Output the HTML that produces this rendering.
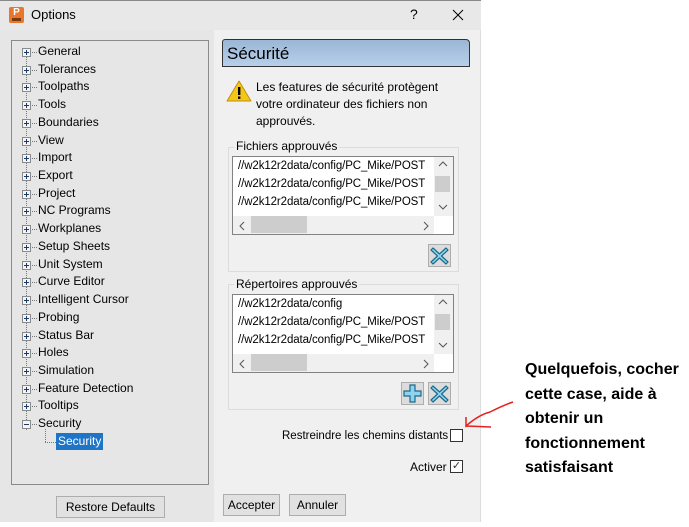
<!DOCTYPE html>
<html><head><meta charset="utf-8"><style>
*{margin:0;padding:0;box-sizing:border-box}
body{width:689px;height:527px;background:#fff;font-family:"Liberation Sans",sans-serif;font-size:12px;color:#000;position:relative;overflow:hidden}
.a{position:absolute}
.win{left:0;top:0;width:481px;height:522px;background:#f0f0f0;border-right:1px solid #ddd}
.title{left:0;top:0;width:481px;height:30px;background:#e8e8e8;border-top:1px solid #888}
.left{left:0;top:30px;width:214px;height:492px;background:#e6e6e6}
.tree{left:11px;top:40px;width:198px;height:445px;border:1px solid #8a8a8a;background:#e6e6e6}
.row{position:absolute;left:26px;height:17px;line-height:17px;white-space:nowrap}
.pb{position:absolute;left:10px;width:9px;height:9px;border:1px solid #8a8a8a;background:#f4f4f4}
.pb:before{content:"";position:absolute;left:1px;top:3px;width:5px;height:1px;background:#1a3a6a}
.pb.p:after{content:"";position:absolute;left:3px;top:1px;width:1px;height:5px;background:#1a3a6a}
.dot{position:absolute;left:20px;width:5px;border-top:1px dotted #777}
.btn{border:1px solid #adadad;background:#e1e1e1;text-align:center;line-height:20px;height:22px}
.list{background:#fff;border:1px solid #828282;overflow:hidden}
.it{position:absolute;left:5px;white-space:nowrap;font-size:11.5px;letter-spacing:-0.1px}
.grp{border:1px solid #dcdcdc}
.ib{width:23px;height:23px;border:1px solid #adadad;background:#dcdcdc}
</style></head><body>
<div class="a win"></div>
<div class="a title"></div>
<div class="a" style="left:9px;top:7px;width:15px;height:16px;background:#e8762c;border-radius:2px;color:#fff;font-size:10px;font-weight:bold;text-align:center;line-height:12px">P<div style="position:absolute;left:3px;bottom:2px;width:9px;height:3px;background:#7a3a10"></div></div>
<div class="a" style="left:31px;top:7px;font-size:13px">Options</div>
<div class="a" style="left:410px;top:6px;font-size:14px">?</div>
<svg class="a" style="left:452px;top:9px" width="12" height="12"><path d="M1 1 L11 11 M11 1 L1 11" stroke="#000" stroke-width="1"/></svg>
<div class="a left"></div>
<div class="a tree">
<div class="a" style="left:14px;top:12px;height:377px;border-left:1px dotted #777"></div>
<div id="rows"></div>
</div>
<div class="a btn" style="left:56px;top:496px;width:109px;">Restore Defaults</div>

<div class="a" style="left:222px;top:39px;width:248px;height:28px;border:1px solid #333;border-radius:3px 4px 0 0;background:linear-gradient(#9bb6d6,#b6cfea);font-size:17px;line-height:27px;padding-left:4px">Sécurité</div>
<svg class="a" style="left:226px;top:80px" width="26" height="22" viewBox="0 0 26 22"><path d="M13 1 L25 21 L1 21 Z" fill="#f5c518" stroke="#c09010" stroke-linejoin="round"/><rect x="12" y="7" width="2.4" height="8" fill="#000"/><rect x="12" y="16.5" width="2.4" height="2.4" fill="#000"/></svg>
<div class="a" style="left:256px;top:79px;line-height:17px;width:200px">Les features de sécurité protègent votre ordinateur des fichiers non approuvés.</div>

<div class="a grp" style="left:228px;top:147px;width:231px;height:125px"></div>
<div class="a" style="left:234px;top:139px;background:#f0f0f0;padding:0 2px">Fichiers approuvés</div>
<div class="a list" style="left:232px;top:156px;width:222px;height:79px">
<div class="it" style="top:3px">//w2k12r2data/config/PC_Mike/POST</div>
<div class="it" style="top:21px">//w2k12r2data/config/PC_Mike/POST</div>
<div class="it" style="top:39px">//w2k12r2data/config/PC_Mike/POST</div>
<div class="a" style="left:201px;top:0;width:19px;height:59px;background:#f0f0f0"></div>
<div class="a" style="left:202px;top:19px;width:15px;height:16px;background:#cdcdcd"></div>
<svg class="a" style="left:205px;top:4px" width="10" height="6"><path d="M1 5 L5 1 L9 5" fill="none" stroke="#555"/></svg>
<svg class="a" style="left:205px;top:47px" width="10" height="6"><path d="M1 1 L5 5 L9 1" fill="none" stroke="#555"/></svg>
<div class="a" style="left:0;top:59px;width:201px;height:18px;background:#f0f0f0"></div>
<div class="a" style="left:18px;top:59px;width:56px;height:17px;background:#cdcdcd"></div>
<svg class="a" style="left:6px;top:64px" width="6" height="10"><path d="M5 1 L1 5 L5 9" fill="none" stroke="#555"/></svg>
<svg class="a" style="left:190px;top:64px" width="6" height="10"><path d="M1 1 L5 5 L1 9" fill="none" stroke="#555"/></svg>
<div class="a" style="left:201px;top:59px;width:19px;height:18px;background:#fff"></div>
</div>
<div class="a ib" style="left:428px;top:244px"><svg width="21" height="21" viewBox="0 0 21 21"><path d="M4 3 L10.5 9 L17 3 L19 5 L12.5 11 L19 17 L17 19 L10.5 13 L4 19 L2 17 L8.5 11 L2 5 Z" fill="#8fd3ee" stroke="#1b6a8a" stroke-width="1.2" stroke-linejoin="round"/></svg></div>

<div class="a grp" style="left:228px;top:284px;width:231px;height:126px"></div>
<div class="a" style="left:234px;top:277px;background:#f0f0f0;padding:0 2px">Répertoires approuvés</div>
<div class="a list" style="left:232px;top:294px;width:222px;height:79px">
<div class="it" style="top:3px">//w2k12r2data/config</div>
<div class="it" style="top:21px">//w2k12r2data/config/PC_Mike/POST</div>
<div class="it" style="top:39px">//w2k12r2data/config/PC_Mike/POST</div>
<div class="a" style="left:201px;top:0;width:19px;height:59px;background:#f0f0f0"></div>
<div class="a" style="left:202px;top:19px;width:15px;height:16px;background:#cdcdcd"></div>
<svg class="a" style="left:205px;top:4px" width="10" height="6"><path d="M1 5 L5 1 L9 5" fill="none" stroke="#555"/></svg>
<svg class="a" style="left:205px;top:47px" width="10" height="6"><path d="M1 1 L5 5 L9 1" fill="none" stroke="#555"/></svg>
<div class="a" style="left:0;top:59px;width:201px;height:18px;background:#f0f0f0"></div>
<div class="a" style="left:18px;top:59px;width:56px;height:17px;background:#cdcdcd"></div>
<svg class="a" style="left:6px;top:64px" width="6" height="10"><path d="M5 1 L1 5 L5 9" fill="none" stroke="#555"/></svg>
<svg class="a" style="left:190px;top:64px" width="6" height="10"><path d="M1 1 L5 5 L1 9" fill="none" stroke="#555"/></svg>
<div class="a" style="left:201px;top:59px;width:19px;height:18px;background:#fff"></div>
</div>
<div class="a ib" style="left:401px;top:382px"><svg width="21" height="21" viewBox="0 0 21 21"><path d="M8 2 H13 V8 H19 V13 H13 V19 H8 V13 H2 V8 H8 Z" fill="#8fd3ee" stroke="#1b6a8a" stroke-width="1.2"/></svg></div>
<div class="a ib" style="left:428px;top:382px"><svg width="21" height="21" viewBox="0 0 21 21"><path d="M4 3 L10.5 9 L17 3 L19 5 L12.5 11 L19 17 L17 19 L10.5 13 L4 19 L2 17 L8.5 11 L2 5 Z" fill="#8fd3ee" stroke="#1b6a8a" stroke-width="1.2" stroke-linejoin="round"/></svg></div>

<div class="a" style="left:282px;top:430px;font-size:11.5px">Restreindre les chemins distants</div>
<div class="a" style="left:450px;top:429px;width:13px;height:13px;border:1px solid #333;background:#fff"></div>
<div class="a" style="left:410px;top:460px">Activer</div>
<div class="a" style="left:450px;top:460px;width:13px;height:13px;border:1px solid #333;background:#fff;font-size:11px;line-height:11px;text-align:center;color:#333">✓</div>

<div class="a btn" style="left:223px;top:494px;width:57px;">Accepter</div>
<div class="a btn" style="left:289px;top:494px;width:57px;">Annuler</div>

<svg class="a" style="left:460px;top:395px" width="60" height="40"><path d="M53 7 C44 10 36 14 30 17 C22 19 14 24 6 31 L6 22 M6 31 L31 32" fill="none" stroke="#e52020" stroke-width="1.5"/></svg>
<div class="a" style="left:525px;top:358px;font-family:'Liberation Sans',sans-serif;font-weight:bold;font-size:16px;line-height:24.5px;white-space:nowrap">Quelquefois, cocher<br>cette case, aide à<br>obtenir un<br>fonctionnement<br>satisfaisant</div>

<script>
var n=["General","Tolerances","Toolpaths","Tools","Boundaries","View","Import","Export","Project","NC Programs","Workplanes","Setup Sheets","Unit System","Curve Editor","Intelligent Cursor","Probing","Status Bar","Holes","Simulation","Feature Detection","Tooltips","Security"];
var h="";n.forEach(function(t,i){var y=2+i*17.72;h+='<div class="pb '+(i<21?'p':'')+'" style="top:'+(y+5)+'px"></div><div class="dot" style="top:'+(y+9)+'px"></div><div class="row" style="top:'+y+'px">'+t+'</div>';});
var y=2+22*17.72;
h+='<div class="a" style="left:33px;top:'+(y-4)+'px;height:13px;border-left:1px dotted #777"></div><div class="a" style="left:33px;top:'+(y+9)+'px;width:11px;border-top:1px dotted #777"></div><div class="row" style="left:44px;top:'+y+'px;background:#1e74c6;color:#fff;padding:0 2px">Security</div>';
document.getElementById("rows").innerHTML=h;
</script>
</body></html>
